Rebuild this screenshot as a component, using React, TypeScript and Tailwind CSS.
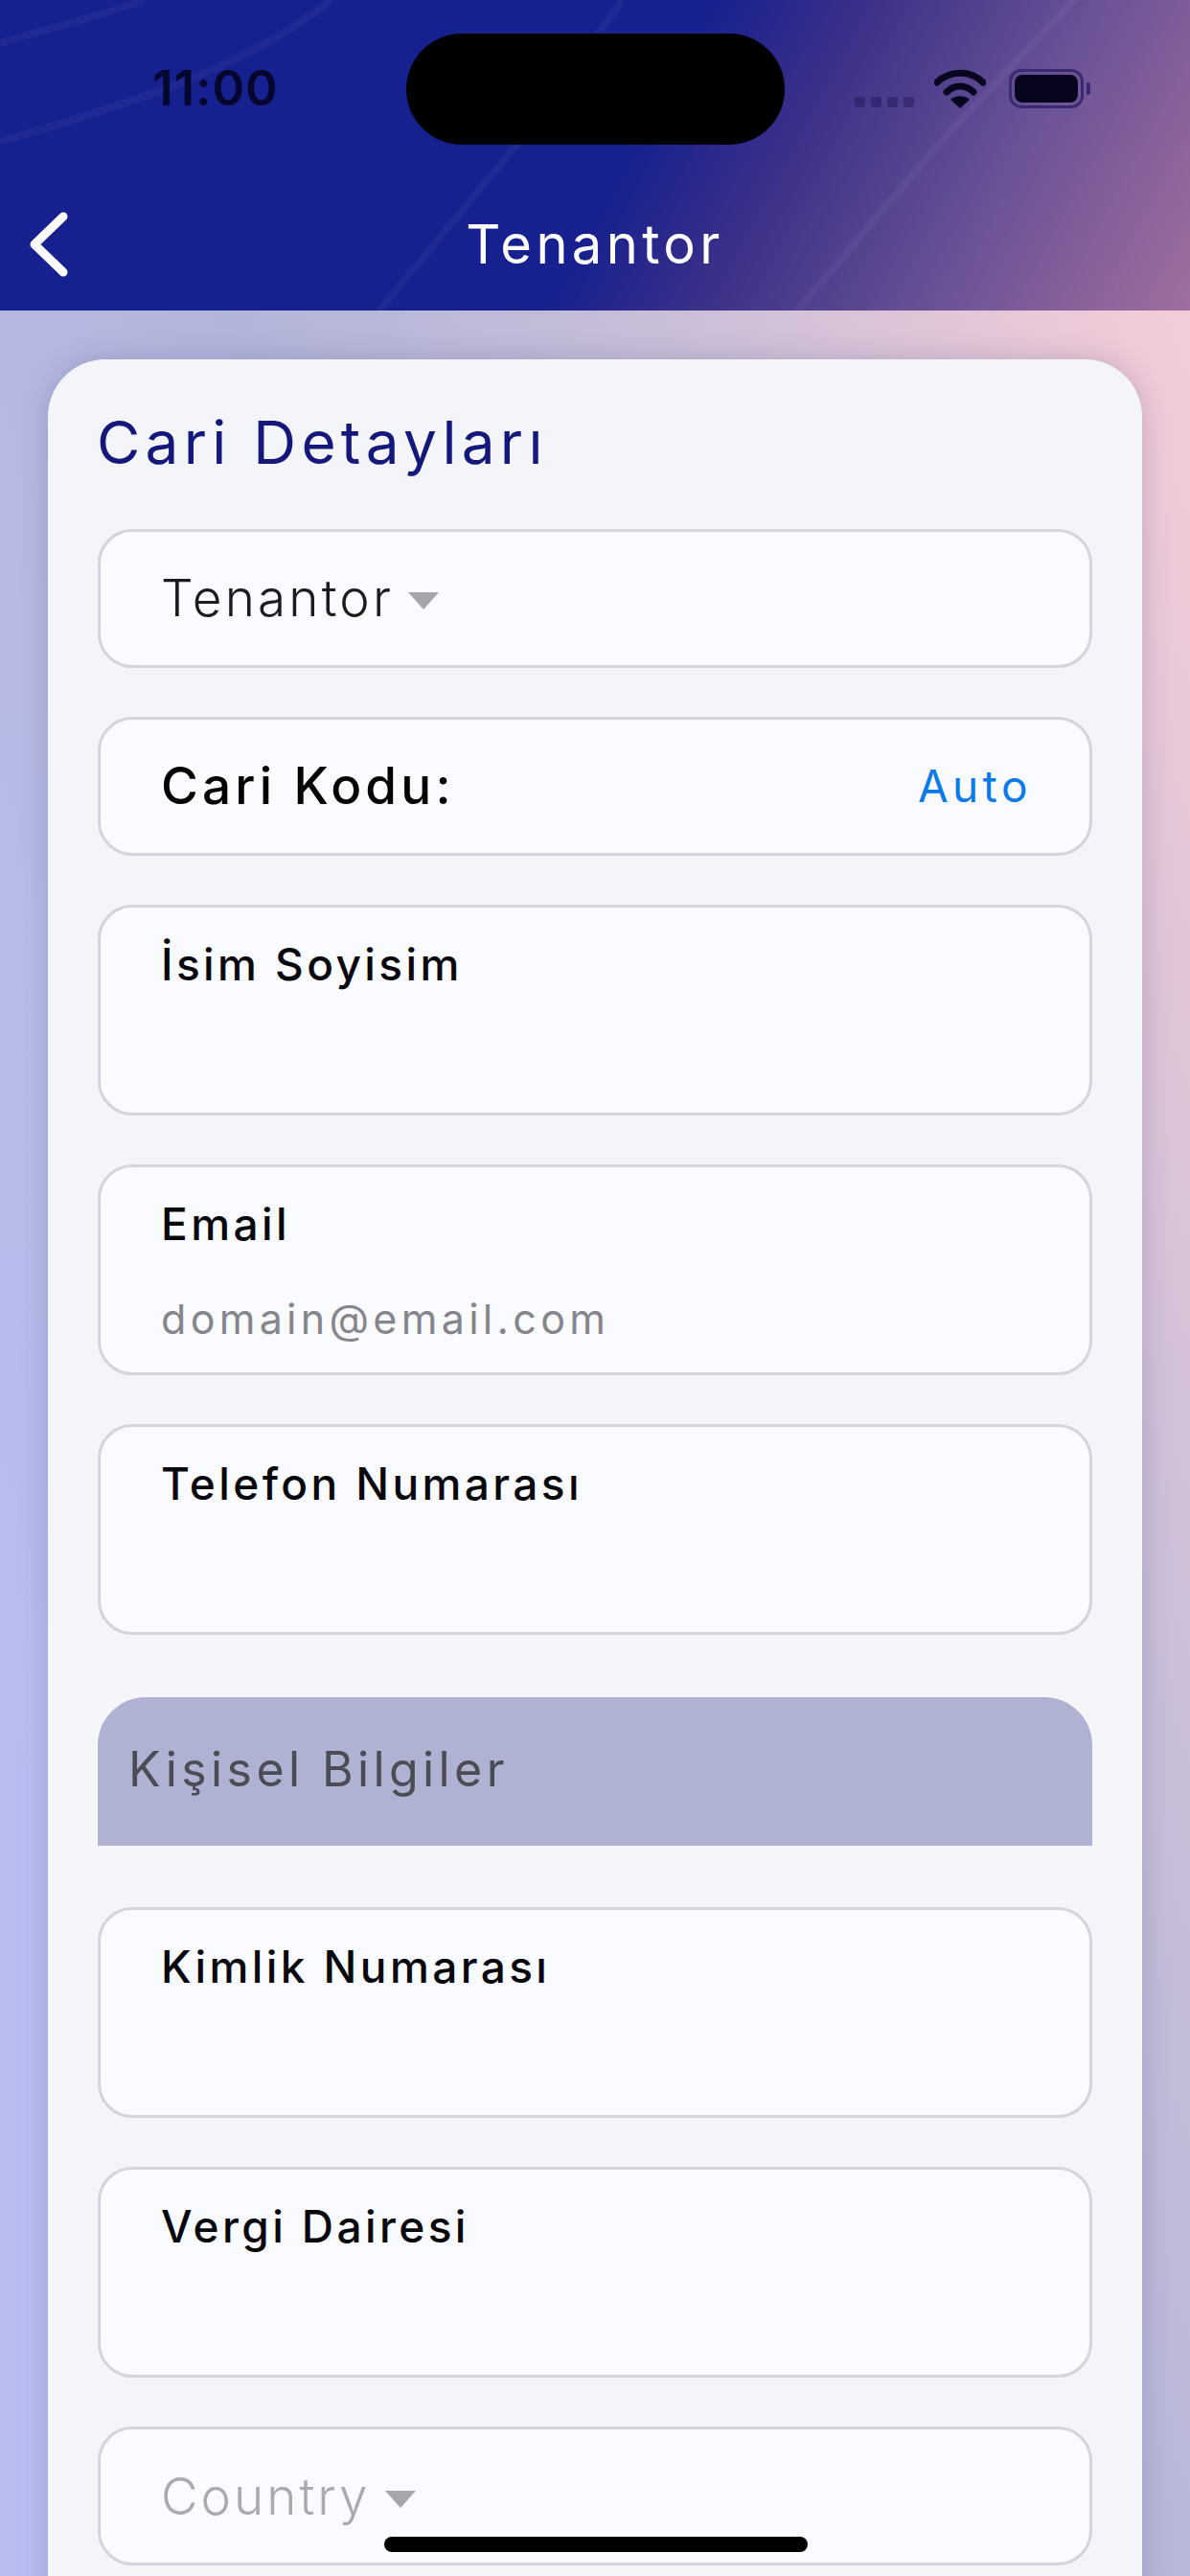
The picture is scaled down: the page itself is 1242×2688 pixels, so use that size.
const font = "font-['Inter','Liberation_Sans',sans-serif]";

const Caret = () => (
  <svg width="32" height="18" viewBox="0 0 32 18" className="ml-[15px] mt-[6px]">
    <path d="M0 0H32L16 18Z" fill="#a6a6ab" />
  </svg>
);

const InputField = ({ label, placeholder }: { label: string; placeholder?: string }) => (
  <div className="h-[220px] rounded-[36px] border-[3px] border-[#d3d4dc] bg-[#fafbff] pl-[63px] pt-[30px]">
    <div className="text-[46px] leading-[58px] font-medium tracking-[3.4px] text-[#08080c]">{label}</div>
    {placeholder && (
      <div className="mt-[42px] text-[43px] leading-[56px] tracking-[4.3px] text-[#85858b]">{placeholder}</div>
    )}
  </div>
);

const Header = () => (
  <div className="relative h-[324px] overflow-hidden bg-[linear-gradient(118deg,#16208f_0%,#16208f_52%,#3b3088_64%,#6d5496_82%,#a06e9f_100%)]">
    <svg className="absolute inset-0" width="1242" height="324" viewBox="0 0 1242 324" fill="none" stroke="#ffffff" strokeOpacity="0.04" strokeWidth="8">
      <path d="M0 148C130 110 260 70 345 0" />
      <path d="M0 45C50 30 110 15 150 0" />
      <path d="M396 324L540 150L650 0" />
      <path d="M832 324L980 150L1121 0" />
    </svg>

    {/* status bar */}
    <div className="absolute left-[159px] top-[62px] text-[51px] leading-[60px] font-semibold tracking-[1px] text-[#05062e]">11:00</div>
    <div className="absolute left-[424px] top-[35px] h-[116px] w-[395px] rounded-[58px] bg-black" />
    <div className="absolute left-[892px] top-[101px] flex gap-[6px]">
      <span className="h-[11px] w-[11px] rounded-[2px] bg-[#1a1250] opacity-40" />
      <span className="h-[11px] w-[11px] rounded-[2px] bg-[#1a1250] opacity-40" />
      <span className="h-[11px] w-[11px] rounded-[2px] bg-[#1a1250] opacity-40" />
      <span className="h-[11px] w-[11px] rounded-[2px] bg-[#1a1250] opacity-40" />
    </div>
    <svg className="absolute left-[975px] top-[71px]" width="54" height="42" viewBox="0 0 54 42" fill="none">
      <path d="M3 15C16 2 38 2 51 15" stroke="#07061e" strokeWidth="7" strokeLinecap="round" />
      <path d="M13 25C21 17 33 17 41 25" stroke="#07061e" strokeWidth="7" strokeLinecap="round" />
      <path d="M27 42L17 33C22 28 32 28 37 33Z" fill="#07061e" />
    </svg>
    <div className="absolute left-[1053px] top-[72px] flex h-[41px] w-[78px] items-center justify-center rounded-[13px] border-[3px] border-[#3a2a72]">
      <div className="h-[29px] w-[66px] rounded-[8px] bg-[#07061e]" />
    </div>
    <div className="absolute left-[1134px] top-[86px] h-[13px] w-[4px] rounded-r-[3px] bg-[#3a2a72]" />

    {/* nav */}
    <svg className="absolute left-[28px] top-[220px]" width="44" height="70" viewBox="0 0 44 70" fill="none">
      <path d="M38 6L8 35L38 64" stroke="#ffffff" strokeWidth="9" strokeLinecap="round" strokeLinejoin="round" />
    </svg>
    <div className="absolute inset-x-0 top-[224px] text-center text-[56px] leading-[62px] tracking-[4.4px] text-white">Tenantor</div>
  </div>
);

export default function App() {
  return (
    <div className={`relative h-[2688px] w-[1242px] overflow-hidden ${font} bg-[linear-gradient(250deg,#f8cfd8_0%,#f0cbd8_8%,#c8bed8_31%,#b2b5da_50%,#b6bae4_65%,#b8bdf0_85%,#b8bdf0_100%)]`}>
      <Header />

      <div className="mx-[50px] mt-[51px] flex flex-col rounded-t-[60px] bg-[#f4f5f9] px-[52px] pb-[100px] pt-[52px] shadow-[0_0_28px_rgba(60,60,110,0.22)]">
        <h1 className="-ml-[1px] text-[62px] leading-[70px] tracking-[5.3px] text-[#14187a]">Cari Detayları</h1>

        <div className="mt-[55px] flex flex-col gap-[51px]">
          <div className="flex h-[145px] items-center rounded-[36px] border-[3px] border-[#d3d4dc] bg-[#fafbff] pb-[2px] pl-[63px]">
            <span className="text-[53px] leading-[60px] font-light tracking-[3.2px] text-[#1c1c20]">Tenantor</span>
            <Caret />
          </div>

          <div className="flex h-[145px] items-center justify-between rounded-[36px] border-[3px] border-[#d3d4dc] bg-[#fafbff] pb-[2px] pl-[63px] pr-[60px]">
            <span className="text-[53px] leading-[60px] font-medium tracking-[4.2px] text-black">Cari Kodu:</span>
            <span className="text-[46px] leading-[56px] tracking-[4.5px] text-[#0a7ae6]">Auto</span>
          </div>

          <InputField label="İsim Soyisim" />
          <InputField label="Email" placeholder="domain@email.com" />
          <InputField label="Telefon Numarası" />
        </div>

        <div className="mt-[65px] flex h-[155px] items-center rounded-t-[50px] bg-[#b0b2d3] pb-[6px] pl-[32px] shadow-[0_0_6px_rgba(255,255,255,0.7)]">
          <span className="text-[50px] leading-[60px] tracking-[4.4px] text-[#4c4c54]">Kişisel Bilgiler</span>
        </div>

        <div className="mt-[64px] flex flex-col gap-[51px]">
          <InputField label="Kimlik Numarası" />
          <InputField label="Vergi Dairesi" />
          <div className="flex h-[145px] items-center rounded-[36px] border-[3px] border-[#d3d4dc] bg-[#fafbff] pl-[63px]">
            <span className="text-[53px] leading-[60px] font-light tracking-[3px] text-[#a9a9ae]">Country</span>
            <Caret />
          </div>
        </div>
      </div>

      {/* home indicator */}
      <div className="absolute left-[401px] top-[2647px] h-[16px] w-[442px] rounded-full bg-black" />
    </div>
  );
}
